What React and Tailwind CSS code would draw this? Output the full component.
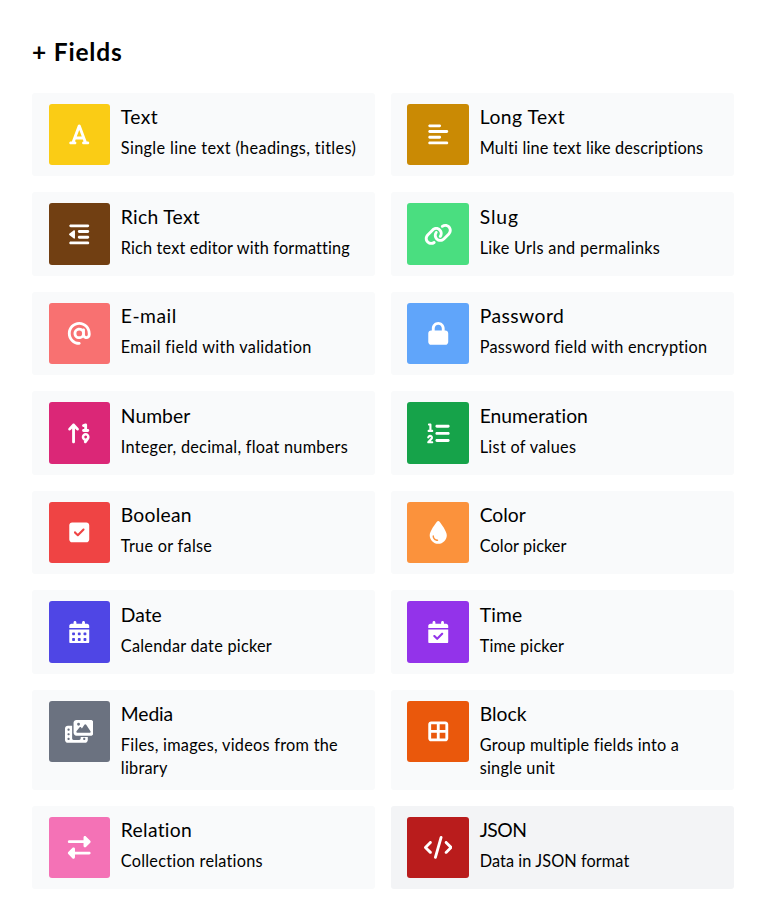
import {
  FaFont, FaAlignLeft, FaOutdent, FaLink, FaAt, FaArrowUp19, FaLock, FaListOl,
  FaSquareCheck, FaDroplet, FaCalendarDays, FaCalendarCheck, FaPhotoFilm,
  FaBorderAll, FaRightLeft, FaCode,
} from "react-icons/fa6";

const fields = [
  { title: "Text", desc: "Single line text (headings, titles)", icon: FaFont, color: "bg-[#facc15]", tt: "tracking-[0.4px]", dt: "tracking-[0.34px]" },
  { title: "Long Text", desc: "Multi line text like descriptions", icon: FaAlignLeft, color: "bg-[#ca8a04]", tt: "tracking-[0.5px]", dt: "tracking-[0.15px]" },
  { title: "Rich Text", desc: "Rich text editor with formatting", icon: FaOutdent, color: "bg-[#713f12]", tt: "tracking-[0.3px]", dt: "tracking-[0.15px]" },
  { title: "Slug", desc: "Like Urls and permalinks", icon: FaLink, color: "bg-[#4ade80]", tt: "tracking-[0.9px]", dt: "tracking-[0.3px]" },
  { title: "E-mail", desc: "Email field with validation", icon: FaAt, color: "bg-[#f87171]", tt: "tracking-[0.5px]", dt: "tracking-[0.32px]" },
  { title: "Password", desc: "Password field with encryption", icon: FaLock, color: "bg-[#60a5fa]", tt: "tracking-[0.45px]", dt: "tracking-[0.25px]" },
  { title: "Number", desc: "Integer, decimal, float numbers", icon: FaArrowUp19, color: "bg-[#db2777]", tt: "tracking-[0.05px]", dt: "tracking-[0.25px]" },
  { title: "Enumeration", desc: "List of values", icon: FaListOl, color: "bg-[#16a34a]", tt: "tracking-[0.02px]", dt: "tracking-[0.3px]" },
  { title: "Boolean", desc: "True or false", icon: FaSquareCheck, color: "bg-[#ef4444]", tt: "tracking-[0.25px]", dt: "tracking-[0.28px]" },
  { title: "Color", desc: "Color picker", icon: FaDroplet, color: "bg-[#fb923c]", tt: "tracking-[0px]", dt: "tracking-[0.08px]" },
  { title: "Date", desc: "Calendar date picker", icon: FaCalendarDays, color: "bg-[#4f46e5]", tt: "tracking-[0px]", dt: "tracking-[0.25px]" },
  { title: "Time", desc: "Time picker", icon: FaCalendarCheck, color: "bg-[#9333ea]", tt: "tracking-[0.2px]", dt: "tracking-[0.15px]" },
  { title: "Media", desc: "Files, images, videos from the library", icon: FaPhotoFilm, color: "bg-[#6b7280]", tt: "tracking-[-0.1px]", dt: "tracking-[0.26px]" },
  { title: "Block", desc: "Group multiple fields into a single unit", icon: FaBorderAll, color: "bg-[#ea580c]", tt: "tracking-[0px]", dt: "tracking-[0.22px]" },
  { title: "Relation", desc: "Collection relations", icon: FaRightLeft, color: "bg-[#f472b6]", tt: "tracking-[0.3px]", dt: "tracking-[0.23px]" },
  { title: "JSON", desc: "Data in JSON format", icon: FaCode, color: "bg-[#b91c1c]", active: true, tt: "tracking-[-0.5px]", dt: "tracking-[0.08px]" },
];

function FieldCard({ title, desc, icon: Icon, color, active, tt, dt }) {
  return (
    <div className={`flex min-h-[83.5px] rounded-[3px] pt-[11px] pr-4 pl-[16.5px] ${active ? "bg-[#f3f4f6]" : "bg-[#f9fafb]"}`}>
      <div className={`flex size-[61.3px] shrink-0 items-center justify-center rounded-[3px] text-white ${color}`}>
        <Icon className="h-[22.8px] w-[28.5px]" />
      </div>
      <div className="mt-[0.55px] ml-[11px] min-w-0 pb-[10.65px] [font-variant-ligatures:no-common-ligatures]">
        <div className={`text-[19.3px] leading-[26px] ${tt}`}>{title}</div>
        <div className={`mt-[5.8px] text-[16.3px] leading-[23px] ${dt}`}>{desc}</div>
      </div>
    </div>
  );
}

export default function App() {
  return (
    <div className="min-h-[921px] bg-white px-8 pt-[34px] font-['Lato',sans-serif] text-black">
      <h1 className="mb-[22.9px] text-[24.5px] leading-9 font-bold tracking-[0.8px]">+ Fields</h1>
      <div className="grid grid-cols-2 gap-x-[15.8px] gap-y-4">
        {fields.map((field) => <FieldCard key={field.title} {...field} />)}
      </div>
    </div>
  );
}
